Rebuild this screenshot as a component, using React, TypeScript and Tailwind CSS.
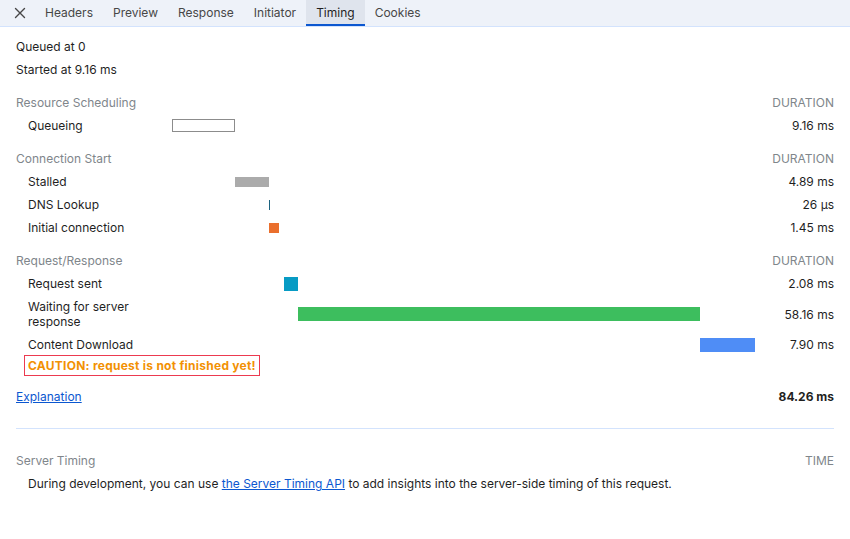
import React from 'react';

type Bar = { left: number; width: number; height: number; className: string };

interface TimingRow {
  label: string;
  duration: string;
  bar: Bar;
}

interface Section {
  title: string;
  rows: TimingRow[];
}

const tabs = ['Headers', 'Preview', 'Response', 'Initiator', 'Timing', 'Cookies'];

// left / width in px of the 583px bar track
const sections: Section[] = [
  {
    title: 'Resource Scheduling',
    rows: [
      { label: 'Queueing', duration: '9.16 ms', bar: { left: 0, width: 63, height: 13, className: 'bg-white border border-[#8c8c8c]' } },
    ],
  },
  {
    title: 'Connection Start',
    rows: [
      { label: 'Stalled', duration: '4.89 ms', bar: { left: 63, width: 34, height: 10, className: 'bg-[#ababab]' } },
      { label: 'DNS Lookup', duration: '26 µs', bar: { left: 97, width: 1, height: 10, className: 'bg-[#1c6380]' } },
      { label: 'Initial connection', duration: '1.45 ms', bar: { left: 97, width: 10, height: 10, className: 'bg-[#ea6f2d]' } },
    ],
  },
  {
    title: 'Request/Response',
    rows: [
      { label: 'Request sent', duration: '2.08 ms', bar: { left: 112, width: 14, height: 14, className: 'bg-[#079bc4]' } },
      { label: 'Waiting for server response', duration: '58.16 ms', bar: { left: 126, width: 402, height: 14, className: 'bg-[#3dbe5e]' } },
      { label: 'Content Download', duration: '7.90 ms', bar: { left: 528, width: 55, height: 14, className: 'bg-[#4f8df6]' } },
    ],
  },
];

const CloseIcon = () => (
  <svg width="12" height="12" viewBox="0 0 12 12" fill="none" stroke="#474747" strokeWidth="1.4" strokeLinecap="round">
    <path d="M1.5 1.5 L10.5 10.5 M10.5 1.5 L1.5 10.5" />
  </svg>
);

export default function App() {
  return (
    <div className="w-[850px] h-[539px] bg-white text-[12px] text-[#1f1f1f] overflow-hidden" style={{ fontFamily: 'Inter, "Noto Sans", sans-serif' }}>
      {/* Tab bar */}
      <div className="flex h-[27px] bg-[#eef2f9] border-b border-[#d3e3fd]">
        <div className="w-[35px] flex items-center pl-[14px]">
          <CloseIcon />
        </div>
        {tabs.map(tab => {
          const active = tab === 'Timing';
          return (
            <div
              key={tab}
              className={`px-[10px] flex items-center pt-[2px] h-[26px] border-b-2 ${active ? 'bg-[#dfe4ed] border-[#0b57d0] text-[#1f1f1f]' : 'border-transparent text-[#474747]'}`}
            >
              <span>{tab}</span>
            </div>
          );
        })}
      </div>

      {/* Content */}
      <div className="pt-2 px-4">
        <div className="py-1 leading-[15px]">Queued at 0</div>
        <div className="py-1 leading-[15px]">Started at 9.16 ms</div>

        {sections.map(section => (
          <div key={section.title}>
            <div className="flex justify-between mt-[10px] py-1 leading-[15px] text-[#80868b]">
              <span>{section.title}</span>
              <span>DURATION</span>
            </div>
            {section.rows.map(row => (
              <div key={row.label} className="grid grid-cols-[156px_1fr_80px] items-center">
                <div className="pl-3 pr-2 py-1 leading-[15px]">{row.label}</div>
                <div className="relative h-[14px] self-center flex items-center">
                  <div
                    className={`absolute ${row.bar.className}`}
                    style={{ left: row.bar.left, width: row.bar.width, height: row.bar.height }}
                  />
                </div>
                <div className="text-right py-1 leading-[15px]">{row.duration}</div>
              </div>
            ))}
          </div>
        ))}

        <div className="pl-2 -mt-px">
          <span className="inline-block border border-[#ec3a50] px-[3px] py-[2px] leading-[15px] font-bold tracking-[0.25px] text-[#f29103]">
            CAUTION: request is not finished yet!
          </span>
        </div>

        <div className="flex justify-between mt-[9px] py-1 leading-[15px]">
          <a href="#" className="text-[#0b57d0] underline">Explanation</a>
          <span className="font-bold">84.26 ms</span>
        </div>

        <div className="border-t border-[#d3e3fd] mt-[20px]" />

        <div className="flex justify-between mt-[20px] py-1 leading-[15px] text-[#80868b]">
          <span>Server Timing</span>
          <span>TIME</span>
        </div>
        <div className="pl-3 py-1 leading-[15px]">
          During development, you can use{' '}
          <a href="#" className="text-[#0b57d0] underline">the Server Timing API</a>{' '}
          to add insights into the server-side timing of this request.
        </div>
      </div>
    </div>
  );
}
